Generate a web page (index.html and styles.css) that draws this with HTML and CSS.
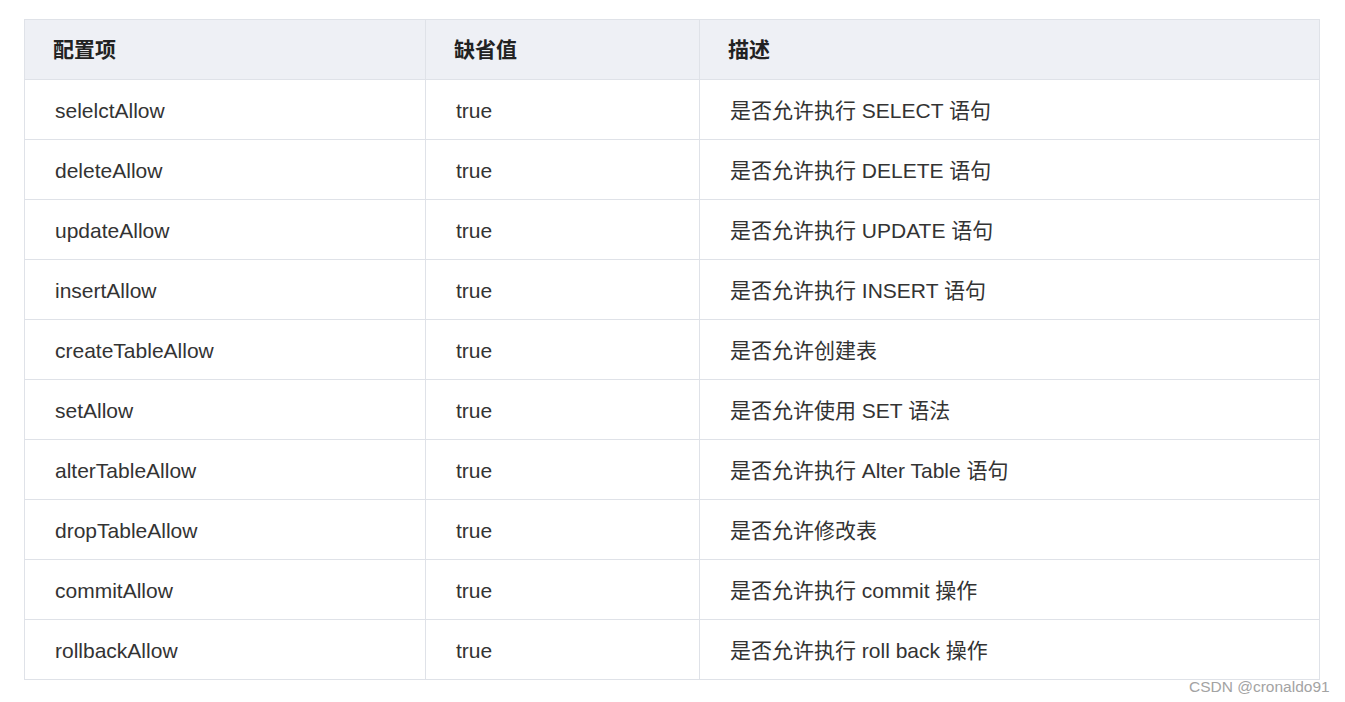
FILE: index.html
```html
<!DOCTYPE html>
<html lang="zh">
<head>
<meta charset="utf-8">
<title>配置项</title>
<link rel="stylesheet" href="styles.css">
</head>
<body>
<div class="page">
  <table class="cfg">
    <colgroup>
      <col class="c1">
      <col class="c2">
      <col class="c3">
    </colgroup>
    <thead>
      <tr><th>配置项</th><th>缺省值</th><th>描述</th></tr>
    </thead>
    <tbody>
      <tr><td>selelctAllow</td><td>true</td><td>是否允许执行 SELECT 语句</td></tr>
      <tr><td>deleteAllow</td><td>true</td><td>是否允许执行 DELETE 语句</td></tr>
      <tr><td>updateAllow</td><td>true</td><td>是否允许执行 UPDATE 语句</td></tr>
      <tr><td>insertAllow</td><td>true</td><td>是否允许执行 INSERT 语句</td></tr>
      <tr><td>createTableAllow</td><td>true</td><td>是否允许创建表</td></tr>
      <tr><td>setAllow</td><td>true</td><td>是否允许使用 SET 语法</td></tr>
      <tr><td>alterTableAllow</td><td>true</td><td>是否允许执行 Alter Table 语句</td></tr>
      <tr><td>dropTableAllow</td><td>true</td><td>是否允许修改表</td></tr>
      <tr><td>commitAllow</td><td>true</td><td>是否允许执行 commit 操作</td></tr>
      <tr><td>rollbackAllow</td><td>true</td><td>是否允许执行 roll back 操作</td></tr>
    </tbody>
  </table>
  <div class="mark">CSDN @cronaldo91</div>
</div>
</body>
</html>
```
FILE: styles.css
```css
html, body {
  margin: 0;
  background: #ffffff;
}
.page {
  position: relative;
  width: 1345px;
  height: 702px;
  padding: 19px 0 0 24px;
  box-sizing: border-box;
  font-family: "Liberation Sans", Arial, "Noto Sans CJK SC", sans-serif;
}
.cfg {
  border-collapse: collapse;
  table-layout: fixed;
  width: 1295px;
  font-size: 21px;
  color: #333333;
}
.c1 { width: 401px; }
.c2 { width: 274px; }
.c3 { width: 620px; }
.cfg th, .cfg td {
  border: 1px solid #dfe2e8;
  height: 60px;
  padding: 0 0 0 30px;
  box-sizing: border-box;
  text-align: left;
  vertical-align: middle;
  line-height: 24px;
}
.cfg td {
  padding-top: 2px;
}
.cfg th {
  background: #eef0f5;
  font-weight: bold;
  color: #222222;
  padding-left: 28px;
  padding-top: 1px;
}
.mark {
  position: absolute;
  left: 1189px;
  top: 678px;
  font-family: "Liberation Sans", Arial, sans-serif;
  font-size: 15.5px;
  color: #a3a3a3;
  white-space: nowrap;
}
```
